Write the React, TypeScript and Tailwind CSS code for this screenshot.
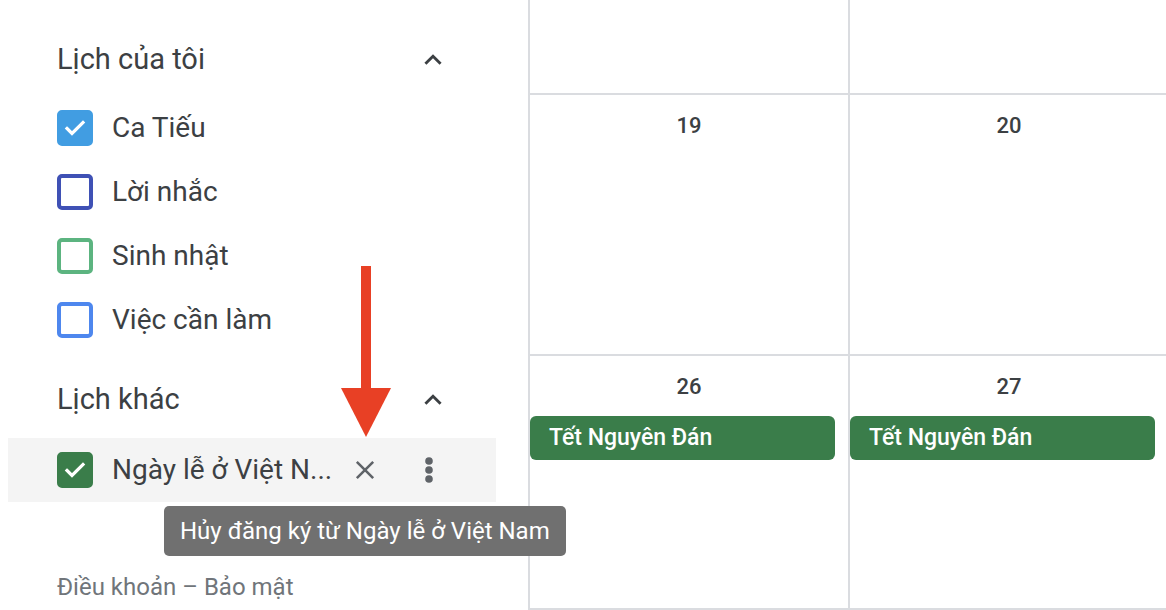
import React from "react";

type Cal = { name: string; color: string; checked?: boolean };

const myCals: Cal[] = [
  { name: "Ca Tiếu", color: "#419de2", checked: true },
  { name: "Lời nhắc", color: "#3f51b5" },
  { name: "Sinh nhật", color: "#5cb480" },
  { name: "Việc cần làm", color: "#4e87ee" },
];

const Check = () => (
  <svg width="24" height="24" viewBox="0 0 24 24" fill="none">
    <path d="M4 12.5l5 5L20 6.5" stroke="#fff" strokeWidth="3.2" strokeLinecap="square" />
  </svg>
);

const Box: React.FC<Cal> = ({ color, checked }) => (
  <div
    className="w-9 h-9 rounded-[5px] border-[4px] flex items-center justify-center shrink-0"
    style={{ borderColor: color, backgroundColor: checked ? color : "transparent" }}
  >
    {checked && <Check />}
  </div>
);

const ChevronUp = () => (
  <svg width="26" height="26" viewBox="0 0 24 24" fill="none">
    <path d="M5 15.5l7-7 7 7" stroke="#3c4043" strokeWidth="2.6" />
  </svg>
);

const Header: React.FC<{ title: string; className?: string }> = ({ title, className }) => (
  <div className={`flex items-center h-[72px] pl-[49px] pr-[50px] ${className || ""}`}>
    <span className="flex-1 text-[29px] text-[#3c4043]">{title}</span>
    <ChevronUp />
  </div>
);

const Cell: React.FC<{ day?: string; event?: string }> = ({ day, event }) => (
  <div className="border-r-2 border-b-2 border-[#dadce0] flex flex-col">
    {day && (
      <div className="pt-[17px] text-center text-[22px] leading-7 font-medium text-[#3c4043]">{day}</div>
    )}
    {event && (
      <div className="mt-[15px] mr-[13px] h-[44px] rounded-[6px] bg-[#3a7d4a] text-white text-[23px] font-medium flex items-center pl-[19px]">
        {event}
      </div>
    )}
  </div>
);

export default function App() {
  return (
    <div
      className="relative w-[1166px] h-[610px] overflow-hidden bg-white flex"
      style={{ fontFamily: "Roboto, 'Noto Sans', sans-serif" }}
    >
      <aside className="w-[528px] shrink-0 pl-2 pt-6">
        <div className="w-[488px]">
          <Header title="Lịch của tôi" className="h-[70px]" />
          <div>
            {myCals.map((c) => (
              <div key={c.name} className="h-16 flex items-center pl-[49px] gap-[19px]">
                <Box {...c} />
                <span className="text-[28px] text-[#3c4043]">{c.name}</span>
              </div>
            ))}
          </div>
          <Header title="Lịch khác" className="mt-3" />
          <div className="mt-[2px] h-16 bg-[#f4f4f4] flex items-center pl-[49px]">
            <Box name="" color="#3a7d4a" checked />
            <span className="ml-[19px] w-[224px] shrink-0 text-[28px] text-[#3c4043] whitespace-nowrap">Ngày lễ ở Việt N...</span>
            <svg className="ml-[15px] shrink-0" width="28" height="28" viewBox="0 0 24 24" fill="none">
              <path d="M5 5l14 14M19 5L5 19" stroke="#5f6368" strokeWidth="2.2" />
            </svg>
            <svg className="ml-[46px] shrink-0" width="8" height="28" viewBox="0 0 8 28" fill="#5f6368">
              <circle cx="4" cy="5" r="3.8" />
              <circle cx="4" cy="14" r="3.8" />
              <circle cx="4" cy="23" r="3.8" />
            </svg>
          </div>
          <div className="mt-[71px] pl-[49px] text-[24px] leading-7 text-[#70757a]">Điều khoản – Bảo mật</div>
        </div>
      </aside>

      <main className="flex-1 border-l-2 border-[#dadce0] grid grid-cols-[320px_320px] grid-rows-[95px_261px_1fr]">
        <Cell />
        <Cell />
        <Cell day="19" />
        <Cell day="20" />
        <Cell day="26" event="Tết Nguyên Đán" />
        <Cell day="27" event="Tết Nguyên Đán" />
      </main>

      <div className="absolute left-[164px] top-[506px] h-[50px] px-4 rounded-[5px] bg-[#707070] text-white text-[24px] flex items-center">
        Hủy đăng ký từ Ngày lễ ở Việt Nam
      </div>

      <svg className="absolute left-[340px] top-[266px]" width="52" height="172" viewBox="0 0 52 172">
        <rect x="21" y="0" width="10" height="124" fill="#e84025" />
        <polygon points="1,122 51,122 26,171" fill="#e84025" />
      </svg>
    </div>
  );
}
